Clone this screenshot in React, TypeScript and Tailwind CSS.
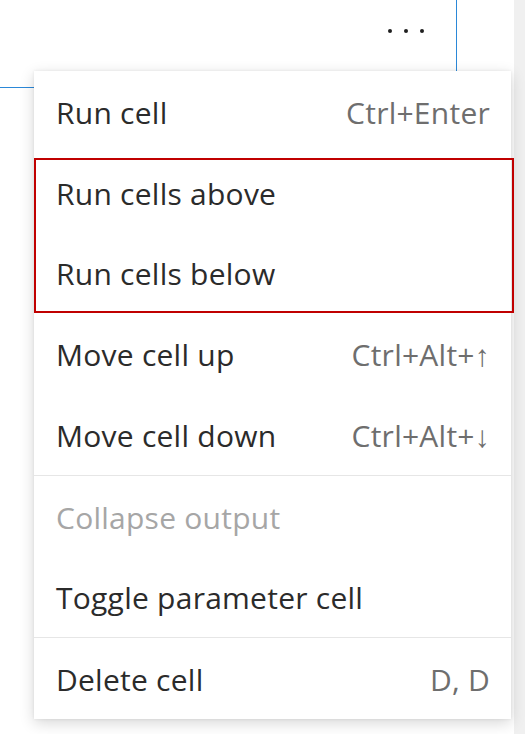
import React from "react";

const font = { fontFamily: '"Open Sans", "Noto Sans", sans-serif' };

function Item({ label, shortcut, disabled }: { label: string; shortcut?: string; disabled?: boolean }) {
  return (
    <div className="flex h-[80.75px] items-center justify-between pl-[22px] pr-[21px] pt-[3px] text-[30px] leading-none tracking-[0.25px]">
      <span className={disabled ? "text-[#a6a6a6]" : "text-[#2b2b2b]"}>{label}</span>
      {shortcut && <span className="text-[#6e6e6e]">{shortcut}</span>}
    </div>
  );
}

export default function App() {
  return (
    <div className="relative flex h-[734px] w-[525px] overflow-hidden bg-white" style={font}>
      <div className="relative w-[514px]">
        <div className="flex h-[88px] w-[457px] items-start justify-end border-b border-r border-[#2b88d8] pr-[32px] pt-[29px]">
          <div className="flex gap-[12px]">
            <span className="h-[4px] w-[4px] rounded-full bg-[#1f1f1f]" />
            <span className="h-[4px] w-[4px] rounded-full bg-[#1f1f1f]" />
            <span className="h-[4px] w-[4px] rounded-full bg-[#1f1f1f]" />
          </div>
        </div>
        <div className="absolute left-[34px] top-[71px] w-[477px] bg-white shadow-[0_4px_14px_rgba(0,0,0,0.16),0_0_3px_rgba(0,0,0,0.08)]">
          <Item label="Run cell" shortcut="Ctrl+Enter" />
          <Item label="Run cells above" />
          <Item label="Run cells below" />
          <Item label="Move cell up" shortcut="Ctrl+Alt+↑" />
          <Item label="Move cell down" shortcut="Ctrl+Alt+↓" />
          <div className="h-px bg-[#e6e6e6]" />
          <Item label="Collapse output" disabled />
          <Item label="Toggle parameter cell" />
          <div className="h-px bg-[#e6e6e6]" />
          <Item label="Delete cell" shortcut="D, D" />
          <div className="absolute left-0 top-[87px] h-[155px] w-[480px] border-2 border-[#c00000]" />
        </div>
      </div>
      <div className="w-[11px] bg-[#f0f0f0]" />
    </div>
  );
}
